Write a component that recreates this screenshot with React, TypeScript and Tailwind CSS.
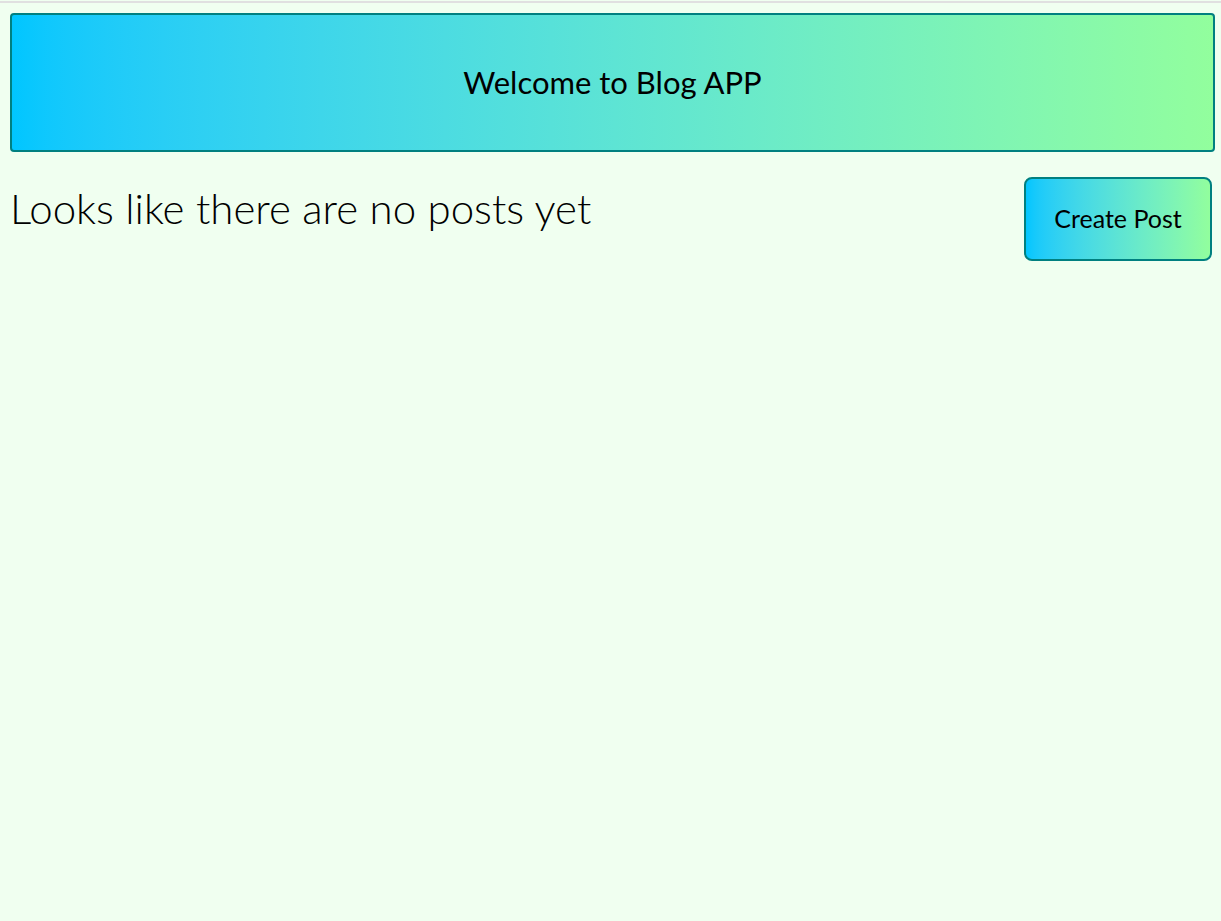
export default function App() {
  return (
    <div className="min-h-screen bg-[#f0fff0] text-black" style={{ fontFamily: "Lato, 'Open Sans', sans-serif" }}>
      <div className="h-[3px] border-t border-[#f0fff0] bg-[#e0e0e0]" />
      <div className="pl-[10px] pr-[6px] pt-[10px]">
        <header className="flex h-[139px] items-center justify-center rounded-[4px] border-2 border-[#008080] bg-gradient-to-r from-[#00c6ff] to-[#92fe9d]">
          <h1 className="text-[31px] font-normal">Welcome to Blog APP</h1>
        </header>
        <div className="mt-[25px] flex items-start justify-between">
          <h2 className="mt-[5px] text-[42px] font-light leading-tight">Looks like there are no posts yet</h2>
          <button className="mr-[3px] h-[84px] w-[188px] rounded-[8px] border-2 border-[#008080] bg-gradient-to-r from-[#00c6ff] to-[#92fe9d] text-[25px]">
            Create Post
          </button>
        </div>
      </div>
    </div>
  )
}
